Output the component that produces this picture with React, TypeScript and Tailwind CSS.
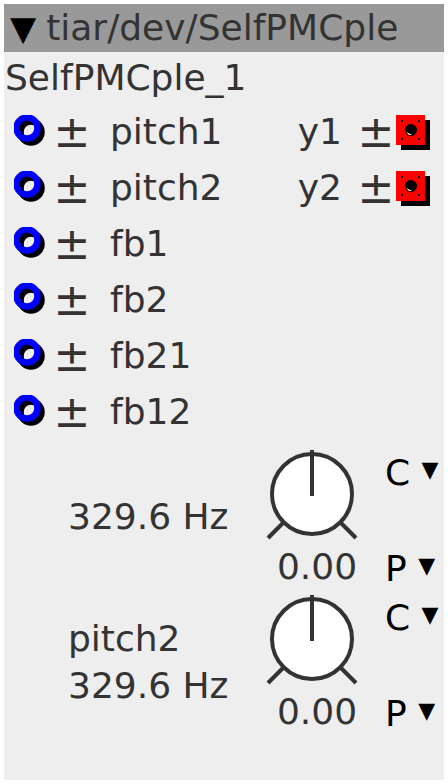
import React from 'react';

function InletIcon() {
  return (
    <svg width="34" height="34" viewBox="0 0 34 34">
      <circle cx="17" cy="17" r="10.5" fill="none" stroke="#000" strokeWidth="6.5" />
      <circle cx="13" cy="13" r="10.5" fill="none" stroke="#0000ff" strokeWidth="6.5" />
    </svg>
  );
}

function OutletIcon() {
  return (
    <svg width="36" height="36" viewBox="0 0 36 36">
      <rect x="5" y="5" width="29" height="30" fill="#000" />
      <rect x="0" y="0" width="29" height="30" fill="#ff0000" />
      <circle cx="15" cy="15" r="6" fill="#000" />
      <path d="M10.5 17 A5 5 0 0 0 16 20 Z" fill="#fff" />
      <rect x="5" y="5" width="2" height="2" fill="#000" />
      <rect x="22" y="5" width="2" height="2" fill="#000" />
      <rect x="5" y="23" width="2" height="2" fill="#000" />
      <rect x="22" y="23" width="2" height="2" fill="#000" />
    </svg>
  );
}

function Knob() {
  return (
    <svg width="92" height="92" viewBox="0 0 92 92">
      <circle cx="46" cy="44" r="40" fill="#fff" stroke="#333" strokeWidth="4" />
      <line x1="46" y1="0" x2="46" y2="46" stroke="#333" strokeWidth="4" />
      <line x1="17" y1="73" x2="2" y2="88" stroke="#333" strokeWidth="4" />
      <line x1="75" y1="73" x2="90" y2="88" stroke="#333" strokeWidth="4" />
    </svg>
  );
}

const inlets = ['pitch1', 'pitch2', 'fb1', 'fb2', 'fb21', 'fb12'];
const outlets = ['y1', 'y2'];

function KnobBlock({ label }: { label?: string }) {
  return (
    <div className="flex h-[145px] items-stretch">
      <div className="flex w-[262px] flex-col justify-center pb-[12px] pl-[64px] leading-[47px]">
        {label && <span>{label}</span>}
        <span>329.6 Hz</span>
      </div>
      <div className="flex w-[92px] flex-col items-center">
        <Knob />
        <span className="ml-[10px] mt-[2px] leading-[46px]">0.00</span>
      </div>
      <div className="-mt-[3px] ml-[27px] flex flex-col justify-between pb-[3px] leading-[46px] text-black">
        <span>C <span className="align-[8px] text-[22px]">▼</span></span>
        <span>P <span className="align-[8px] text-[22px]">▼</span></span>
      </div>
    </div>
  );
}

export default function App() {
  return (
    <div className="min-h-screen bg-white p-1">
      <div className="flex h-[776px] w-[440px] flex-col bg-[#eeeeee] font-['DejaVu_Sans',sans-serif] text-[36px] text-[#333]">
        <div className="flex h-[48px] items-center bg-[#999999] pl-[6px]">
          <span className="mr-[10px] text-[34px] text-black">▼</span>
          <span>tiar/dev/SelfPMCple</span>
        </div>
        <div className="flex h-[52px] items-center pl-[1px]">SelfPMCple_1</div>
        <div className="flex flex-col">
          {inlets.map((name, i) => (
            <div key={name} className="flex h-[56px] items-center">
              <div className="ml-[10px] flex w-[34px] items-center">
                <InletIcon />
              </div>
              <span className="ml-[4px] w-[40px] text-center text-[44px] leading-[56px]">±</span>
              <span className="ml-[18px]">{name}</span>
              {outlets[i] && (
                <div className="ml-auto mr-[12px] flex items-center">
                  <span>{outlets[i]}</span>
                  <span className="ml-[14px] w-[40px] text-center text-[44px] leading-[56px]">±</span>
                  <span className="mt-[2px] flex">
                    <OutletIcon />
                  </span>
                </div>
              )}
            </div>
          ))}
        </div>
        <div className="mt-[10px]">
          <KnobBlock />
        </div>
        <KnobBlock label="pitch2" />
      </div>
    </div>
  );
}
